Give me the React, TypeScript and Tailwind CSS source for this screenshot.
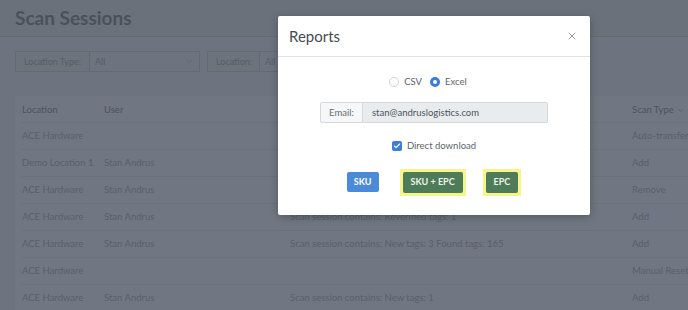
import { X, ChevronDown, Check } from "lucide-react";

const rows = [
  { loc: "ACE Hardware", user: "", desc: "", type: "Auto-transfer" },
  { loc: "Demo Location 1", user: "Stan Andrus", desc: "", type: "Add" },
  { loc: "ACE Hardware", user: "Stan Andrus", desc: "", type: "Remove" },
  { loc: "ACE Hardware", user: "Stan Andrus", desc: "Scan session contains: Reverified tags: 1", type: "Add" },
  { loc: "ACE Hardware", user: "Stan Andrus", desc: "Scan session contains: New tags: 3 Found tags: 165", type: "Add" },
  { loc: "ACE Hardware", user: "", desc: "", type: "Manual Reset" },
  { loc: "ACE Hardware", user: "Stan Andrus", desc: "Scan session contains: New tags: 1", type: "Add" },
];

function Filter({ label, value, width, labelWidth }: { label: string; value: string; width: string; labelWidth: string }) {
  return (
    <div className={`flex h-[21px] items-stretch border border-[#646a73] text-[9px] text-[#565d67] ${width}`}>
      <div className={`flex items-center border-r border-[#646a73] bg-[#6c737c] pl-[8px] ${labelWidth}`}>{label}</div>
      <div className="flex flex-1 items-center justify-between px-[5px]">
        <span>{value}</span>
        <ChevronDown className="h-[9px] w-[9px] text-[#5a616b]" />
      </div>
    </div>
  );
}

export default function App() {
  return (
    <div className="relative h-[310px] w-[688px] overflow-hidden bg-[#6d747f] font-['Lato',sans-serif]">
      {/* page behind the modal */}
      <div className="flex h-[37px] items-center border-b border-[#646a73] bg-[#6a717b] pl-[15px]">
        <h1 className="text-[19px] font-bold text-[#4a515b]">Scan Sessions</h1>
      </div>

      <div className="flex gap-[7px] px-[15px] pt-[14px]">
        <Filter label="Location Type:" value="All" width="w-[185px]" labelWidth="w-[74px]" />
        <Filter label="Location:" value="All" width="w-[200px]" labelWidth="w-[52px]" />
      </div>

      <div className="ml-[15px] mt-[24px] bg-[#707782] pl-[7px]">
        <div className="grid h-[26px] grid-cols-[82px_186px_342px_1fr] items-center pt-[3px] text-[9.5px] text-[#4d545e]">
          <span>Location</span>
          <span>User</span>
          <span></span>
          <span className="flex items-center gap-[3px]">
            Scan Type <ChevronDown className="h-[7px] w-[7px]" />
          </span>
        </div>
        {rows.map((r, i) => (
          <div
            key={i}
            className="grid h-[27px] grid-cols-[82px_186px_342px_1fr] items-center border-t border-[#6a717b] text-[9.5px] text-[#59606a]"
          >
            <span>{r.loc}</span>
            <span>{r.user}</span>
            <span>{r.desc}</span>
            <span className="whitespace-nowrap">{r.type}</span>
          </div>
        ))}
      </div>

      {/* Reports modal */}
      <div className="absolute left-[278px] top-[16px] w-[312px] rounded-[2px] bg-white shadow-[0_2px_8px_rgba(0,0,0,0.25)]">
        <div className="flex h-[41px] items-center justify-between border-b border-[#e3e3e3] pl-[11px] pr-[12px]">
          <span className="text-[15px] text-[#454b52]">Reports</span>
          <X className="h-[12px] w-[12px] text-[#777]" strokeWidth={1.5} />
        </div>

        <div className="flex flex-col items-center pb-[19px] pt-[18px] text-[9.5px] text-[#5d636a]">
          <div className="flex items-center gap-[8px] pr-[12px]">
            <label className="flex items-center gap-[5px]">
              <span className="h-[10px] w-[10px] rounded-full border border-[#cfd3d7] bg-white" />
              CSV
            </label>
            <label className="flex items-center gap-[5px]">
              <span className="flex h-[10px] w-[10px] items-center justify-center rounded-full bg-[#3b7ddd]">
                <span className="h-[4px] w-[4px] rounded-full bg-white" />
              </span>
              Excel
            </label>
          </div>

          <div className="mt-[13px] flex h-[21px] w-[228px] items-stretch text-[9.5px]">
            <div className="flex w-[43px] items-center justify-center rounded-l-[2px] border border-[#d6d9dc] bg-[#f6f7f8] text-[#666c73]">
              Email:
            </div>
            <div className="flex flex-1 items-center rounded-r-[2px] border border-l-0 border-[#d6d9dc] bg-[#e9ecef] pl-[9px] text-[#4d535a]">
              stan@andruslogistics.com
            </div>
          </div>

          <label className="mt-[16px] flex items-center gap-[5px]">
            <span className="flex h-[10px] w-[10px] items-center justify-center rounded-[2px] bg-[#3b7ddd]">
              <Check className="h-[8px] w-[8px] text-white" strokeWidth={3.5} />
            </span>
            Direct download
          </label>

          <div className="mt-[15px] flex items-center text-[9px] font-bold text-white">
            <button className="h-[20px] rounded-[2px] bg-[#4b8ad9] px-[7px]">SKU</button>
            <div className="ml-[21px] bg-[#f6f48a] p-[3px]">
              <button className="h-[21px] rounded-[2px] bg-[#4e7b58] px-[8px] text-[#eef3ec]">SKU + EPC</button>
            </div>
            <div className="ml-[17px] bg-[#f6f48a] p-[3px]">
              <button className="h-[21px] rounded-[2px] bg-[#4e7b58] px-[8px] text-[#eef3ec]">EPC</button>
            </div>
          </div>
        </div>
      </div>
    </div>
  );
}
